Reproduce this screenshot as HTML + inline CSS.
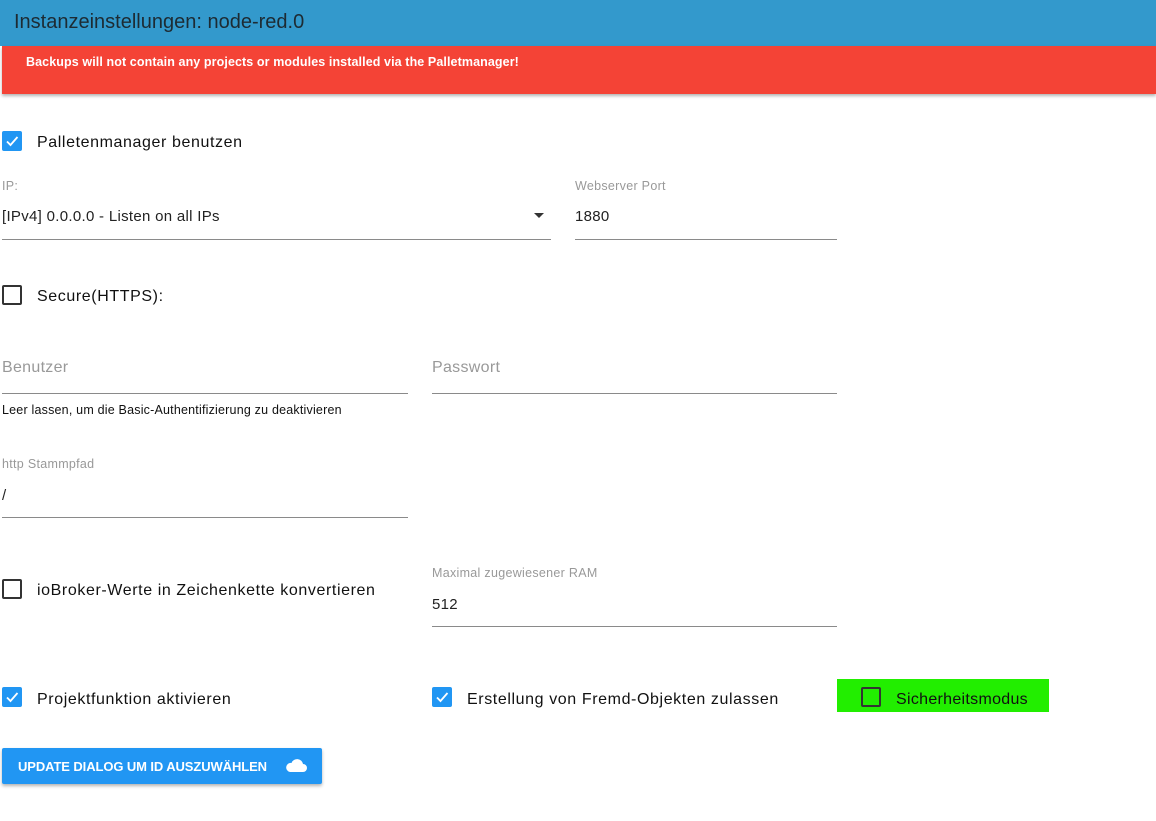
<!DOCTYPE html>
<html><head><meta charset="utf-8"><style>
*{margin:0;padding:0;box-sizing:border-box}
body{width:1156px;height:821px;background:#fff;font-family:"Liberation Sans",sans-serif;position:relative;overflow:hidden;color:#111}
.a{position:absolute}
.hdr{left:0;top:0;width:1156px;height:46px;background:#3399cc;color:#1d2b33;font-size:20px;padding:11px 0 0 14px}
.red{left:2px;top:46px;width:1154px;height:48px;background:#f44336;color:#fff;font-size:12.5px;font-weight:bold;padding:9px 0 0 24px;box-shadow:0 2px 3px rgba(0,0,0,.3);letter-spacing:.1px}
.cb{width:20px;height:20px;border-radius:2px}
.off{border:2px solid #333}
.lbl{font-size:16px;color:#111;letter-spacing:.6px}
.sm{font-size:12.5px;color:#999;letter-spacing:.3px}
.line{height:1px;background:#8a8a8a}
.val{font-size:15px;color:#222;letter-spacing:.3px}
.ph{font-size:16px;color:#999;letter-spacing:.3px}
</style></head><body>
<div class="a hdr">Instanzeinstellungen: node-red.0</div>
<div class="a red">Backups will not contain any projects or modules installed via the Palletmanager!</div>

<svg class="a" style="left:2px;top:131px" width="20" height="20"><rect width="20" height="20" rx="2" fill="#2196f3"/><path d="M5 10.5l3.5 3.5 7-8" stroke="#fff" stroke-width="1.8" fill="none"/></svg>
<div class="a lbl" style="left:37px;top:134px">Palletenmanager benutzen</div>

<div class="a sm" style="left:2px;top:179px">IP:</div>
<div class="a val" style="left:2px;top:208px">[IPv4] 0.0.0.0 - Listen on all IPs</div>
<svg class="a" style="left:534px;top:213px" width="10" height="6"><path d="M0 0h10L5 5z" fill="#333"/></svg>
<div class="a line" style="left:2px;top:239px;width:549px"></div>
<div class="a sm" style="left:575px;top:179px">Webserver Port</div>
<div class="a val" style="left:575px;top:208px">1880</div>
<div class="a line" style="left:575px;top:239px;width:262px"></div>

<div class="a cb off" style="left:2px;top:285px"></div>
<div class="a lbl" style="left:37px;top:288px">Secure(HTTPS):</div>

<div class="a ph" style="left:2px;top:359px">Benutzer</div>
<div class="a line" style="left:2px;top:393px;width:406px"></div>
<div class="a" style="left:2px;top:403px;font-size:12.5px;color:#111;letter-spacing:.2px">Leer lassen, um die Basic-Authentifizierung zu deaktivieren</div>
<div class="a ph" style="left:432px;top:359px">Passwort</div>
<div class="a line" style="left:432px;top:393px;width:405px"></div>

<div class="a sm" style="left:2px;top:457px">http Stammpfad</div>
<div class="a val" style="left:2px;top:487px">/</div>
<div class="a line" style="left:2px;top:517px;width:406px"></div>

<div class="a cb off" style="left:2px;top:579px"></div>
<div class="a lbl" style="left:37px;top:582px">ioBroker-Werte in Zeichenkette konvertieren</div>
<div class="a sm" style="left:432px;top:566px">Maximal zugewiesener RAM</div>
<div class="a val" style="left:432px;top:596px">512</div>
<div class="a line" style="left:432px;top:626px;width:405px"></div>

<svg class="a" style="left:2px;top:687px" width="20" height="20"><rect width="20" height="20" rx="2" fill="#2196f3"/><path d="M5 10.5l3.5 3.5 7-8" stroke="#fff" stroke-width="1.8" fill="none"/></svg>
<div class="a lbl" style="left:37px;top:691px">Projektfunktion aktivieren</div>
<svg class="a" style="left:432px;top:687px" width="20" height="20"><rect width="20" height="20" rx="2" fill="#2196f3"/><path d="M5 10.5l3.5 3.5 7-8" stroke="#fff" stroke-width="1.8" fill="none"/></svg>
<div class="a lbl" style="left:467px;top:691px">Erstellung von Fremd-Objekten zulassen</div>
<div class="a" style="left:837px;top:679px;width:212px;height:33px;background:#22ee00"></div>
<div class="a cb off" style="left:861px;top:687px"></div>
<div class="a lbl" style="left:896px;top:691px;letter-spacing:.3px">Sicherheitsmodus</div>

<div class="a" style="left:2px;top:748px;width:320px;height:36px;background:#2196f3;border-radius:2px;box-shadow:0 2px 3px rgba(0,0,0,.3);color:#fff;font-size:13px;font-weight:bold;padding:11px 0 0 16px;letter-spacing:-.1px">UPDATE DIALOG UM ID AUSZUWÄHLEN</div>
<svg class="a" style="left:285px;top:757px" width="22" height="16"><path d="M5 15h13a4 4 0 0 0 0-8 6 6 0 0 0-11.5-1A4.5 4.5 0 0 0 5 15z" fill="#fff"/></svg>
</body></html>
